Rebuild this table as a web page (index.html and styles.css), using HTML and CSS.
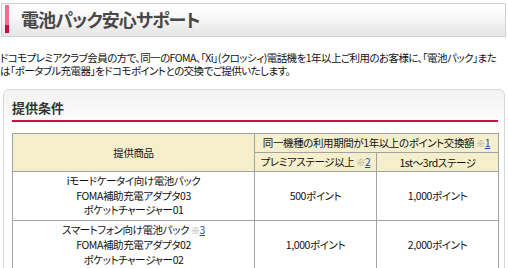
FILE: index.html
```html
<!DOCTYPE html>
<html lang="ja">
<head>
<meta charset="utf-8">
<title>電池パック安心サポート</title>
<link rel="stylesheet" href="styles.css">
</head>
<body>
<div class="page-head">
  <span class="head-bar"></span>
  <h1 class="head-title">電池パック安心サポート</h1>
</div>
<p class="lead">ドコモプレミアクラブ会員の方で、同一のFOMA、「Xi」(クロッシィ)電話機を1年以上ご利用のお客様に、「電池パック」また<br>は「ポータブル充電器」をドコモポイントとの交換でご提供いたします。</p>
<div class="section">
  <h2 class="section-title">提供条件</h2>
  <table class="cond">
    <colgroup><col class="c1"><col class="c2"><col class="c3"></colgroup>
    <tr class="hr1">
      <th rowspan="2">提供商品</th>
      <th colspan="2">同一機種の利用期間が1年以上のポイント交換額 <span class="kome">※</span><a class="note" href="#n1">1</a></th>
    </tr>
    <tr class="hr2">
      <th>プレミアステージ以上 <span class="kome">※</span><a class="note" href="#n2">2</a></th>
      <th>1st〜3rdステージ</th>
    </tr>
    <tr>
      <td>iモードケータイ向け電池パック<br>FOMA補助充電アダプタ03<br>ポケットチャージャー01</td>
      <td>500ポイント</td>
      <td>1,000ポイント</td>
    </tr>
    <tr>
      <td>スマートフォン向け電池パック <span class="kome">※</span><a class="note" href="#n3">3</a><br>FOMA補助充電アダプタ02<br>ポケットチャージャー02</td>
      <td>1,000ポイント</td>
      <td>2,000ポイント</td>
    </tr>
  </table>
</div>
</body>
</html>
```
FILE: styles.css
```css
html, body {
  margin: 0;
  padding: 0;
  background: #fff;
}
body {
  font-family: "Noto Sans CJK JP", "Liberation Sans", sans-serif;
  font-feature-settings: "palt";
  color: #111;
  width: 508px;
  overflow: hidden;
}
.page-head {
  box-sizing: border-box;
  width: 505px;
  height: 34px;
  margin: 3px 0 0 1px;
  border: 1px solid #cfcfcf;
  background: linear-gradient(to bottom, #ffffff 0%, #f7f7f7 45%, #ececec 75%, #e6e6e6 100%);
  display: flex;
  align-items: flex-start;
}
.head-bar {
  display: block;
  width: 4px;
  height: 28px;
  margin: 1px 0 0 3px;
  background: linear-gradient(to bottom, #e8728f 0, #e8728f 20px, #d6004b 20px, #d6004b 100%);
}
.head-title {
  margin: 0 0 0 12px;
  font-size: 18px;
  line-height: 30px;
  font-weight: bold;
  color: #484848;
  letter-spacing: -0.9px;
}
.lead {
  margin: 14px 0 0 0;
  font-size: 10.5px;
  line-height: 13px;
  letter-spacing: -0.55px;
  white-space: nowrap;
  color: #111;
}
.section {
  box-sizing: border-box;
  width: 502px;
  margin: 12px 0 0 3px;
  padding: 10px 6px 10px 8px;
  border: 1px solid #d9d9d9;
  border-bottom: none;
  border-radius: 6px 6px 0 0;
  background: linear-gradient(to bottom, #f3f3f3 0, #fafafa 25px, #ffffff 40px);
}
.section-title {
  margin: 0;
  padding-bottom: 4px;
  font-size: 13px;
  line-height: 16px;
  font-weight: bold;
  color: #333;
  border-bottom: 2px solid #cc1040;
}
.cond {
  margin-top: 11px;
  width: 486px;
  border-collapse: collapse;
  table-layout: fixed;
  font-size: 10.5px;
  letter-spacing: -0.4px;
}
.c1 { width: 242px; }
.c2 { width: 122px; }
.c3 { width: 122px; }
.cond th, .cond td {
  border: 1px solid #a3a3a3;
  text-align: center;
  vertical-align: middle;
  font-weight: normal;
  color: #111;
  white-space: nowrap;
}
.cond th {
  background: #f6efcc;
  height: 17px;
  line-height: 17px;
  padding: 0;
}
.cond td {
  line-height: 14.5px;
  padding: 2px 0;
  height: 42px;
}
.kome {
  color: #999;
  font-size: 9px;
}
.note {
  color: #1f4f9f;
  text-decoration: underline;
}
```
